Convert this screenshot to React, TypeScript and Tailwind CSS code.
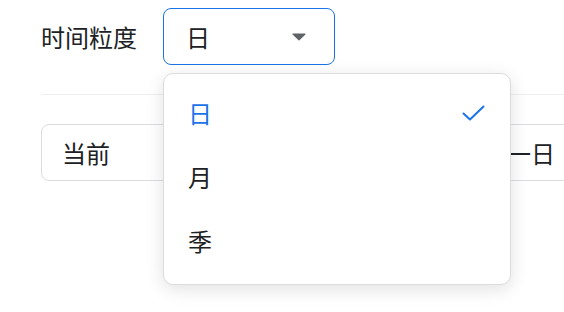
export default function App() {
  const options = ["日", "月", "季"];
  const selected = "日";

  return (
    <div
      className="relative w-[564px] h-[312px] overflow-hidden bg-white text-[#202124]"
      style={{ fontFamily: '"Noto Sans CJK SC", "Noto Sans", sans-serif' }}
    >
      {/* Filter row */}
      <div className="flex items-center pl-[41px] pt-[8px]">
        <span className="w-[122px] text-[24px] leading-none">时间粒度</span>
        <div className="flex h-[57px] w-[172px] items-center justify-between rounded-[8px] border border-[#1a73e8] pl-[22px] pr-[28px]">
          <span className="text-[24px] leading-none">日</span>
          <svg width="14" height="8" viewBox="0 0 14 8">
            <path d="M1 0.5h12a0.6 0.6 0 0 1 .45 1L7.45 7.3a0.6 0.6 0 0 1-.9 0L.55 1.5A.6.6 0 0 1 1 .5z" fill="#5f6368" />
          </svg>
        </div>
      </div>

      <div className="ml-[41px] mt-[29px] border-t border-[#eeeeee]" />

      {/* Compare row */}
      <div className="ml-[41px] mt-[29px] flex h-[57px] w-[560px] items-center justify-between rounded-[8px] border border-[#dadce0] pl-[20px] pr-[45px]">
        <span className="text-[24px] leading-none">当前</span>
        <span className="text-[24px] leading-none">上一日</span>
      </div>

      {/* Dropdown menu */}
      <div className="absolute left-[163px] top-[73px] w-[348px] rounded-[10px] border border-[#dadce0] bg-white pt-[7px] pb-[11px] shadow-[0_4px_18px_rgba(0,0,0,0.12)]">
        {options.map((o) => (
          <div key={o} className="flex h-[64px] items-center justify-between pl-[24px] pr-[25px]">
            <span className={`text-[24px] leading-none ${o === selected ? "text-[#1a73e8]" : "text-[#202124]"}`}>{o}</span>
            {o === selected && (
              <svg width="23" height="16" viewBox="0 0 23 16" fill="none">
                <path d="M1.5 8.5 8 14.5 21.5 1.5" stroke="#1a73e8" strokeWidth="2" strokeLinecap="round" strokeLinejoin="round" />
              </svg>
            )}
          </div>
        ))}
      </div>
    </div>
  );
}
